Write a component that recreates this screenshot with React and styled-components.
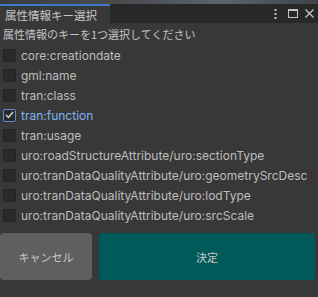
import React from "react";
import styled, { createGlobalStyle } from "styled-components";

const Global = createGlobalStyle`
  html, body { margin: 0; padding: 0; background: #383838; }
  body { font-family: Inter, "Noto Sans CJK JP", sans-serif; }
`;

const Window = styled.div`
  width: 318px;
  height: 297px;
  background: #383838;
  display: flex;
  flex-direction: column;
  overflow: hidden;
`;

const Backdrop = styled.div`
  height: 4px;
  background: linear-gradient(90deg, #3c3c3c 0%, #4a4c50 40%, #5a6470 70%, #3f4248 100%);
`;

const Header = styled.div`
  height: 19px;
  display: flex;
  align-items: stretch;
  background: #282828;
`;

const Tab = styled.div`
  width: 110px;
  box-sizing: border-box;
  background: #383838;
  border-top: 2px solid #3a7bc8;
  padding-left: 5px;
  display: flex;
  align-items: center;
  font-size: 11.5px;
  color: #c8c8c8;
  font-family: "Noto Sans CJK JP", sans-serif;
`;

const Tools = styled.div`
  margin-left: auto;
  display: flex;
  align-items: center;
  padding-right: 4px;
  color: #c4c4c4;
`;

const ToolIcon = styled.span`
  display: flex;
  margin-left: ${(p) => p.$gap || 0}px;
`;

const Body = styled.div`
  display: flex;
  flex-direction: column;
  flex: 1;
`;

const Subtitle = styled.div`
  height: 22px;
  display: flex;
  align-items: center;
  padding-left: 3px;
  font-size: 11px;
  color: #c4c4c4;
  font-family: "Noto Sans CJK JP", sans-serif;
`;

const List = styled.div`
  display: flex;
  flex-direction: column;
`;

const Row = styled.div`
  height: 20px;
  display: flex;
  align-items: center;
  padding-left: 3px;
  gap: 5px;
  font-size: 12px;
  color: ${(p) => (p.$checked ? "#7fb3f2" : "#bdbdbd")};
`;

const Box = styled.div`
  width: 13px;
  height: 13px;
  box-sizing: border-box;
  border-radius: 2px;
  background: #2a2a2a;
  border: 1px solid ${(p) => (p.$checked ? "#5a90d0" : "#232323")};
  display: flex;
  align-items: center;
  justify-content: center;
`;

const Buttons = styled.div`
  display: flex;
  gap: 7px;
  padding: 8px 3px 0 0;
`;

const Button = styled.button`
  height: 47px;
  flex: ${(p) => (p.$primary ? "1" : "0 0 92px")};
  border: none;
  border-radius: 4px;
  background: ${(p) => (p.$primary ? "#005a5a" : "#5f5f5f")};
  color: #c8c8c8;
  font-size: 11px;
  font-family: "Noto Sans CJK JP", sans-serif;
  padding: 0;
`;

const items = [
  "core:creationdate",
  "gml:name",
  "tran:class",
  "tran:function",
  "tran:usage",
  "uro:roadStructureAttribute/uro:sectionType",
  "uro:tranDataQualityAttribute/uro:geometrySrcDesc",
  "uro:tranDataQualityAttribute/uro:lodType",
  "uro:tranDataQualityAttribute/uro:srcScale",
];

export default function App() {
  return (
    <>
      <Global />
      <Window>
        <Backdrop />
        <Header>
          <Tab>属性情報キー選択</Tab>
          <Tools>
            <ToolIcon>
              <svg width="3" height="10" viewBox="0 0 3 10">
                <rect x="0.5" y="0" width="2" height="2" fill="#c4c4c4" />
                <rect x="0.5" y="4" width="2" height="2" fill="#c4c4c4" />
                <rect x="0.5" y="8" width="2" height="2" fill="#c4c4c4" />
              </svg>
            </ToolIcon>
            <ToolIcon $gap={11}>
              <svg width="10" height="9" viewBox="0 0 10 9">
                <rect x="0.5" y="0.5" width="9" height="8" fill="none" stroke="#c4c4c4" />
                <rect x="0" y="0" width="10" height="2" fill="#c4c4c4" />
              </svg>
            </ToolIcon>
            <ToolIcon $gap={7}>
              <svg width="9" height="9" viewBox="0 0 9 9">
                <path d="M0.5 0.5 L8.5 8.5 M8.5 0.5 L0.5 8.5" stroke="#c4c4c4" strokeWidth="1.3" />
              </svg>
            </ToolIcon>
          </Tools>
        </Header>
        <Body>
          <Subtitle>属性情報のキーを1つ選択してください</Subtitle>
          <List>
            {items.map((t) => {
              const checked = t === "tran:function";
              return (
                <Row key={t} $checked={checked}>
                  <Box $checked={checked}>
                    {checked && (
                      <svg width="9" height="8" viewBox="0 0 9 8">
                        <path d="M1 4 L3.5 6.5 L8 1" fill="none" stroke="#d8d8d8" strokeWidth="1.4" />
                      </svg>
                    )}
                  </Box>
                  {t}
                </Row>
              );
            })}
          </List>
          <Buttons>
            <Button>キャンセル</Button>
            <Button $primary>決定</Button>
          </Buttons>
        </Body>
      </Window>
    </>
  );
}
